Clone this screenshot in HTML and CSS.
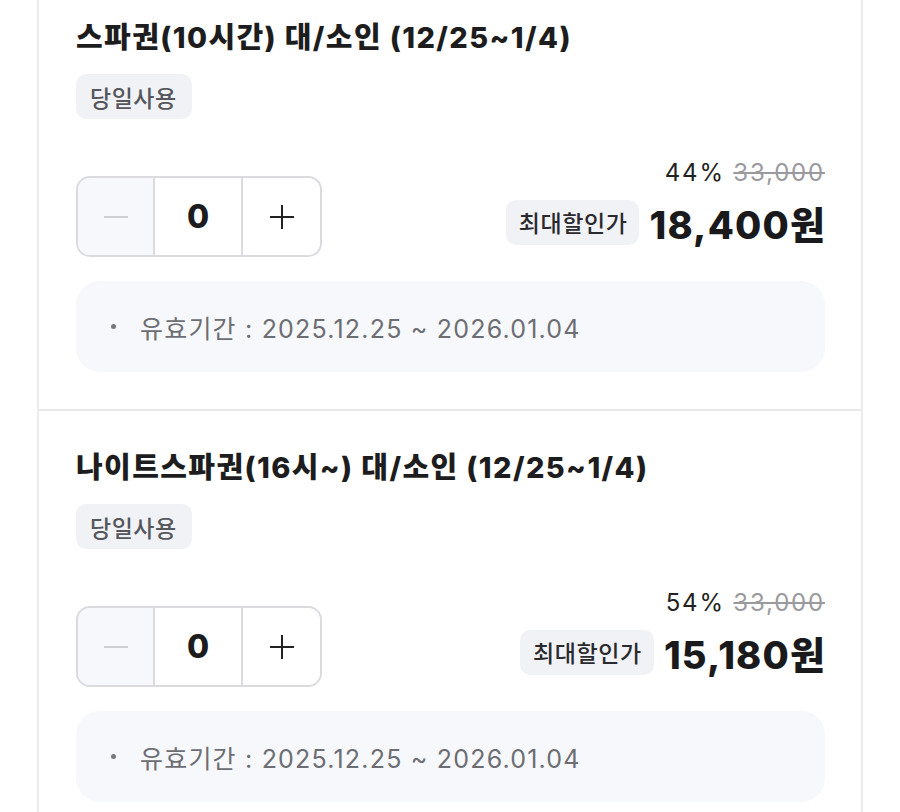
FILE: index.html
```html
<!DOCTYPE html>
<html lang="ko">
<head>
<meta charset="utf-8">
<title>상품 선택</title>
<link rel="stylesheet" href="styles.css">
</head>
<body>
<div class="list">
  <section class="card">
    <h2 class="title">스파권(10시간) 대/소인 (12/25~1/4)</h2>
    <span class="tag">당일사용</span>
    <div class="row">
      <div class="stepper">
        <button class="step minus" aria-label="감소"><span class="bar"></span></button>
        <span class="count">0</span>
        <button class="step plus" aria-label="증가">
          <svg width="26" height="26" viewBox="0 0 26 26"><path d="M13 1v24M1 13h24" stroke="#222" stroke-width="2" fill="none"/></svg>
        </button>
      </div>
      <div class="price">
        <div class="rate"><span class="pct">44%</span> <del class="orig">33,000</del></div>
        <div class="final"><span class="badge">최대할인가</span><strong class="amount">18,400원</strong></div>
      </div>
    </div>
    <div class="info"><span class="dot"></span><span class="info-text">유효기간 : 2025.12.25 ~ 2026.01.04</span></div>
  </section>
  <section class="card">
    <h2 class="title">나이트스파권(16시~) 대/소인 (12/25~1/4)</h2>
    <span class="tag">당일사용</span>
    <div class="row">
      <div class="stepper">
        <button class="step minus" aria-label="감소"><span class="bar"></span></button>
        <span class="count">0</span>
        <button class="step plus" aria-label="증가">
          <svg width="26" height="26" viewBox="0 0 26 26"><path d="M13 1v24M1 13h24" stroke="#222" stroke-width="2" fill="none"/></svg>
        </button>
      </div>
      <div class="price">
        <div class="rate"><span class="pct">54%</span> <del class="orig">33,000</del></div>
        <div class="final"><span class="badge">최대할인가</span><strong class="amount">15,180원</strong></div>
      </div>
    </div>
    <div class="info"><span class="dot"></span><span class="info-text">유효기간 : 2025.12.25 ~ 2026.01.04</span></div>
  </section>
</div>
</body>
</html>
```
FILE: styles.css
```css
* { box-sizing: border-box; }
html, body { margin: 0; padding: 0; background: #fff; }
body {
  font-family: "Inter", "Noto Sans CJK KR", sans-serif;
  color: #1c1c1e;
  overflow: hidden;
}
.list {
  margin: -21px 37px 0;
  border-left: 2px solid #ececef;
  border-right: 2px solid #ececef;
}
.card {
  border-top: 2px solid #e9e9ec;
  padding: 39px 36px 37px 37px;
  display: flex;
  flex-direction: column;
  align-items: flex-start;
}
.title {
  margin: 0;
  font-size: 29px;
  line-height: 36px;
  font-weight: 800;
  letter-spacing: 1.4px;
  color: #1d1d20;
}
.tag {
  margin-top: 18px;
  height: 45px;
  display: inline-flex;
  align-items: center;
  padding: 0 15px 0 14px;
  background: #f1f2f5;
  border-radius: 10px;
  font-size: 23px;
  color: #55575c;
  font-weight: 500;
  letter-spacing: 0.5px;
}
.row {
  margin-top: 39px;
  width: 100%;
  display: flex;
  justify-content: space-between;
  align-items: flex-end;
}
.stepper {
  display: flex;
  height: 81px;
  width: 246px;
  border: 2px solid #dadadf;
  border-radius: 14px;
  overflow: hidden;
}
.step {
  width: 77px;
  border: 0;
  padding: 0;
  margin: 0;
  background: #fff;
  display: flex;
  align-items: center;
  justify-content: center;
}
.minus { background: #f7f8fb; border-right: 2px solid #dadadf; }
.bar { width: 24px; height: 2px; background: #cfd0d4; }
.count {
  flex: 1;
  display: flex;
  align-items: center;
  justify-content: center;
  font-size: 32px;
  font-weight: 800;
  border-right: 2px solid #dadadf;
}
.price {
  display: flex;
  flex-direction: column;
  align-items: flex-end;
  padding-bottom: 6px;
}
.rate {
  height: 30px;
  line-height: 30px;
  font-size: 24px;
  letter-spacing: 1.8px;
  margin-bottom: 5px;
}
.pct { color: #222; }
.orig { color: #9a9a9e; text-decoration: line-through; text-decoration-thickness: 2px; }
.final {
  height: 58px;
  display: flex;
  align-items: center;
  gap: 10px;
}
.badge {
  height: 45px;
  display: inline-flex;
  align-items: center;
  padding: 0 12px 0 13px;
  background: #f1f2f5;
  border-radius: 10px;
  font-size: 23px;
  font-weight: 500;
  color: #2a2a2e;
  letter-spacing: 0.6px;
}
.amount {
  font-size: 38px;
  font-weight: 800;
  letter-spacing: 1.2px;
  margin-right: -1.2px;
  color: #1a1a1d;
}
.info {
  margin-top: 24px;
  width: 100%;
  height: 91px;
  background: #f7f8fb;
  border-radius: 24px;
  display: flex;
  align-items: center;
  padding: 0 36px 0 35px;
}
.dot {
  width: 5px;
  height: 5px;
  border-radius: 50%;
  background: #77797f;
  margin-right: 24px;
}
.info-text {
  font-size: 25px;
  color: #6c6e74;
  letter-spacing: 1.2px;
}
```
